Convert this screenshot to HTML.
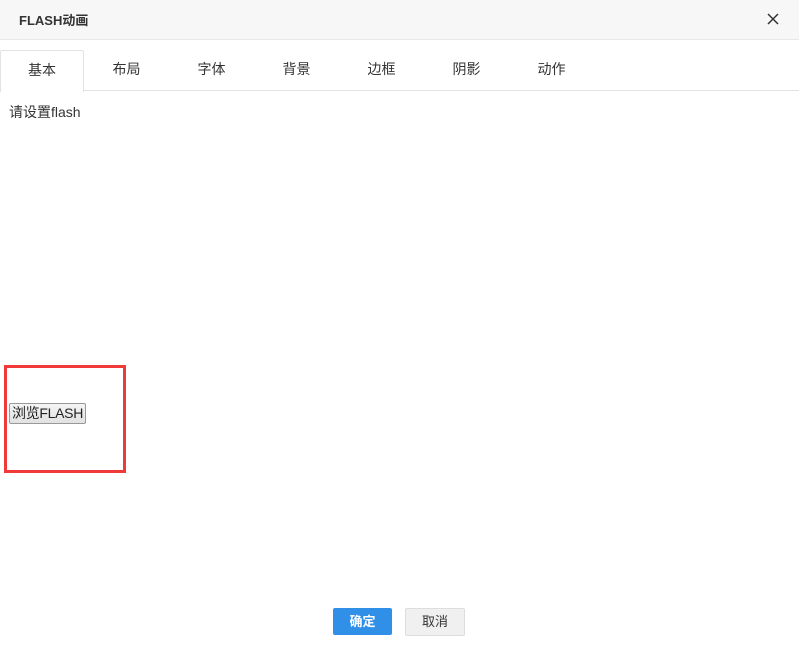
<html><head><style>
body{margin:0;width:799px;height:648px;background:#fff;font-family:"Liberation Sans","Noto Sans CJK SC",sans-serif;position:relative;overflow:hidden;color:#333}
.hd{position:absolute;left:0;top:0;width:799px;height:39px;background:#f7f7f7;border-bottom:1px solid #e8e8e8}
.hd b{position:absolute;left:19px;top:10px;font-size:13px;color:#333}
.x{position:absolute;left:766px;top:12px}
.tabs{position:absolute;left:0;top:90px;width:799px;border-top:1px solid #e3e3e3}
.t{position:absolute;top:49px;width:85px;height:40px;line-height:40px;text-align:center;font-size:14px;color:#333}
.act{left:0;width:82px;border:1px solid #e3e3e3;border-bottom:none;height:41px;background:#fff;border-radius:2px 2px 0 0;top:50px;line-height:39px}
.p{position:absolute;left:9px;top:102px;font-size:14px}
.red{position:absolute;left:4px;top:365px;width:116px;height:102px;border:3px solid #f03a3a}
.fb{position:absolute;left:9px;top:403px;width:75px;height:19px;border:1px solid #999;background:linear-gradient(#f5f5f5,#e2e2e2);font-size:14px;line-height:19px;text-align:center;border-radius:2px;color:#222;white-space:nowrap;letter-spacing:-0.3px}
.ok{position:absolute;left:333px;top:608px;width:59px;height:27px;background:#3090e8;color:#fff;font-size:13px;line-height:27px;text-align:center;border-radius:2px;font-weight:bold}
.cc{position:absolute;left:405px;top:608px;width:58px;height:26px;background:#f0f0f0;border:1px solid #ddd;color:#333;font-size:13px;line-height:26px;text-align:center;border-radius:2px}
</style></head><body>
<div class="hd"><b>FLASH动画</b>
<svg class="x" width="14" height="14" viewBox="0 0 14 14"><path d="M2 2L12 12M12 2L2 12" stroke="#333" stroke-width="1.5"/></svg></div>
<div class="tabs"></div>
<div class="t act">基本</div>
<div class="t" style="left:84px">布局</div>
<div class="t" style="left:169px">字体</div>
<div class="t" style="left:254px">背景</div>
<div class="t" style="left:339px">边框</div>
<div class="t" style="left:424px">阴影</div>
<div class="t" style="left:509px">动作</div>
<div class="p">请设置flash</div>
<div class="red"></div>
<div class="fb">浏览FLASH</div>
<div class="ok">确定</div>
<div class="cc">取消</div>
</body></html>
